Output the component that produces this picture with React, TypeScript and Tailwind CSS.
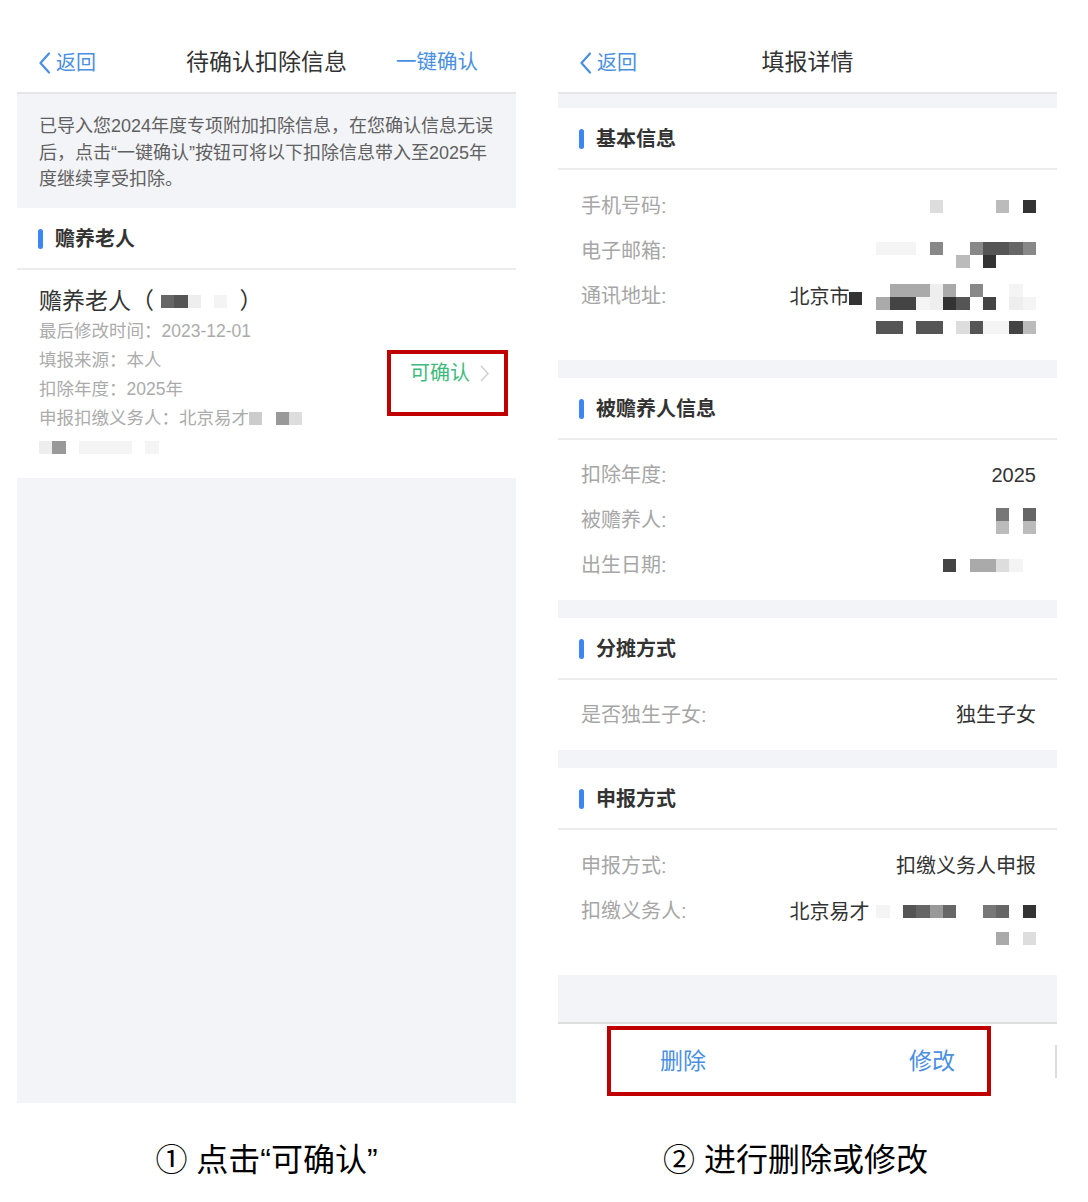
import React from "react"

// shade keys used by the blurred (mosaic) bits of personal info
const shade: Record<string, string> = {
  "0": "bg-[#333333]",
  "1": "bg-[#444444]",
  "2": "bg-[#555555]",
  "3": "bg-[#666666]",
  "4": "bg-[#777777]",
  "5": "bg-[#888888]",
  "6": "bg-[#999999]",
  "7": "bg-[#aaaaaa]",
  "8": "bg-[#bbbbbb]",
  "9": "bg-[#cccccc]",
  a: "bg-[#dddddd]",
  b: "bg-[#eeeeee]",
  c: "bg-[#f4f4f4]",
  ".": "bg-transparent",
}

function Mosaic({ rows }: { rows: string[] }) {
  return (
    <div className="flex flex-col">
      {rows.map((row, i) => (
        <div key={i} className="flex">
          {row.split("").map((c, j) => (
            <div key={j} className={`w-[13.3px] h-[13px] ${shade[c]}`} />
          ))}
        </div>
      ))}
    </div>
  )
}

function BackChevron() {
  return (
    <svg width="13" height="22" viewBox="0 0 13 22" fill="none">
      <polyline points="11,1.5 2.5,11 11,20.5" stroke="#4a8fe2" strokeWidth="2.2" strokeLinecap="round" strokeLinejoin="round" />
    </svg>
  )
}

function NavBar({ title, action }: { title: string; action?: string }) {
  return (
    <div className="h-[63px] shrink-0 bg-white border-b-2 border-[#e6e6e8] grid grid-cols-[1fr_auto_1fr] items-center pt-[2px]">
      <div className="flex items-center gap-[5px] pl-[21px] text-[20px] text-[#4a8fe2]">
        <BackChevron />
        <span>返回</span>
      </div>
      <div className="text-[23px] text-[#333]">{title}</div>
      <div className="justify-self-end pr-[38px] text-[20.5px] text-[#4a8fe2]">{action}</div>
    </div>
  )
}

function SectionHeader({ title }: { title: string }) {
  return (
    <div className="h-[62px] shrink-0 bg-white border-b-2 border-[#ececee] flex items-center gap-[12px] pl-[21px] pt-[1px]">
      <div className="w-[5px] h-[20px] rounded-full bg-[#3b86f2]" />
      <span className="text-[20px] font-bold text-[#333]">{title}</span>
    </div>
  )
}

function Row({ label, children }: { label: string; children?: React.ReactNode }) {
  return (
    <div className="flex justify-between items-start pl-[23px] pr-[21px]">
      <span className="leading-[45px] text-[20px] text-[#a6a6a6]">{label}</span>
      <div className="flex flex-col items-end">{children}</div>
    </div>
  )
}

function LeftPanel() {
  return (
    <div className="h-[1072px] bg-[#f3f4f8] flex flex-col">
      <NavBar title="待确认扣除信息" action="一键确认" />
      <div className="h-[114px] shrink-0 pl-[22px] pt-[19px] text-[18px] leading-[26.5px] text-[#606060] whitespace-nowrap">
        <div>已导入您2024年度专项附加扣除信息，在您确认信息无误</div>
        <div>后，点击“一键确认”按钮可将以下扣除信息带入至2025年</div>
        <div>度继续享受扣除。</div>
      </div>
      <SectionHeader title="赡养老人" />
      <div className="h-[208px] shrink-0 bg-white flex justify-between pl-[22px] pr-[8px]">
        <div className="pt-[16px]">
          <div className="flex items-center text-[23px] leading-[30px] text-[#333]">
            <span>赡养老人（</span>
            <div className="ml-[7px] mr-[12px]">
              <Mosaic rows={["32b.c"]} />
            </div>
            <span>）</span>
          </div>
          <div className="pt-[1px] text-[17.5px] leading-[29px] text-[#ababab]">
            <div>最后修改时间：2023-12-01</div>
            <div>填报来源：本人</div>
            <div>扣除年度：2025年</div>
            <div className="flex items-center">
              <span>申报扣缴义务人：北京易才</span>
              <Mosaic rows={["9.6a"]} />
            </div>
            <div className="h-[29px] flex items-center">
              <Mosaic rows={["b6.cccc.c"]} />
            </div>
          </div>
        </div>
        <div className="mt-[80px] self-start w-[121px] h-[66px] border-4 border-[#c00000] flex items-start gap-[10px] pl-[19px] pt-[7px]">
          <span className="text-[20px] leading-[24px] text-[#3dba7c]">可确认</span>
          <svg width="9" height="17" viewBox="0 0 9 17" fill="none" className="mt-[4px]">
            <polyline points="1,1 8,8.5 1,16" stroke="#cfcfcf" strokeWidth="1.5" />
          </svg>
        </div>
      </div>
    </div>
  )
}

function RightPanel() {
  return (
    <div className="h-[1072px] bg-[#f3f4f8] flex flex-col">
      <NavBar title="填报详情" />
      <div className="h-[14px] shrink-0" />
      <SectionHeader title="基本信息" />
      <div className="h-[190px] shrink-0 bg-white pt-[14px]">
        <Row label="手机号码:">
          <div className="h-[45px] flex items-center">
            <Mosaic rows={["a....8.0"]} />
          </div>
        </Row>
        <Row label="电子邮箱:">
          <div className="h-[45px] flex items-center pt-[7px]">
            <Mosaic rows={["ccc.5..52235", "......8.0..."]} />
          </div>
        </Row>
        <Row label="通讯地址:">
          <div className="h-[45px] flex items-center text-[20px] text-[#333]">
            <span>北京市</span>
            <div className="w-[13px] h-[13px] bg-[#333] mr-[14px] mt-[3px]" />
            <Mosaic rows={[".777b7.5..c", "711cb02.1.bc"]} />
          </div>
          <div className="mt-[2px]">
            <Mosaic rows={["22.22.a2cc18"]} />
          </div>
        </Row>
      </div>
      <div className="h-[18px] shrink-0" />
      <SectionHeader title="被赡养人信息" />
      <div className="h-[160px] shrink-0 bg-white pt-[13px]">
        <Row label="扣除年度:">
          <span className="leading-[45px] text-[20px] text-[#333]">2025</span>
        </Row>
        <Row label="被赡养人:">
          <div className="h-[45px] flex items-center">
            <Mosaic rows={["4.3", "8.8"]} />
          </div>
        </Row>
        <Row label="出生日期:">
          <div className="h-[45px] flex items-center">
            <Mosaic rows={["1.77ac."]} />
          </div>
        </Row>
      </div>
      <div className="h-[18px] shrink-0" />
      <SectionHeader title="分摊方式" />
      <div className="h-[70px] shrink-0 bg-white pt-[13px]">
        <Row label="是否独生子女:">
          <span className="leading-[45px] text-[20px] text-[#333]">独生子女</span>
        </Row>
      </div>
      <div className="h-[18px] shrink-0" />
      <SectionHeader title="申报方式" />
      <div className="h-[145px] shrink-0 bg-white pt-[14px]">
        <Row label="申报方式:">
          <span className="leading-[45px] text-[20px] text-[#333]">扣缴义务人申报</span>
        </Row>
        <Row label="扣缴义务人:">
          <div className="h-[45px] flex items-center text-[20px] text-[#333]">
            <span className="mr-[7px]">北京易才</span>
            <Mosaic rows={["c.2363..43.0"]} />
          </div>
          <div className="-mt-[2px]">
            <Mosaic rows={["7.a"]} />
          </div>
        </Row>
      </div>
      <div className="flex-1" />
      <div className="h-[81px] shrink-0 bg-white border-t-2 border-[#dedede] flex items-start">
        <div className="ml-[49px] mt-[2px] w-[384px] h-[70px] border-4 border-[#c00000] flex items-center justify-between pl-[49px] pr-[32px] text-[23px] text-[#4a8fe2]">
          <span>删除</span>
          <span>修改</span>
        </div>
        <div className="ml-auto mt-[21px] w-[2px] h-[33px] bg-[#dcdcdc]" />
      </div>
    </div>
  )
}

export default function App() {
  return (
    <div
      className="w-[1088px] h-[1202px] bg-white flex gap-[42px] pl-[17px] pt-[31px]"
      style={{ fontFamily: '"Liberation Sans", "Noto Sans CJK SC", sans-serif' }}
    >
      <div className="w-[499px] flex flex-col">
        <LeftPanel />
        <div className="mt-[37px] text-center text-[32px] leading-[40px] text-black">① 点击“可确认”</div>
      </div>
      <div className="w-[499px] flex flex-col">
        <RightPanel />
        <div className="mt-[37px] pr-[24px] text-center text-[32px] leading-[40px] text-black">② 进行删除或修改</div>
      </div>
    </div>
  )
}
